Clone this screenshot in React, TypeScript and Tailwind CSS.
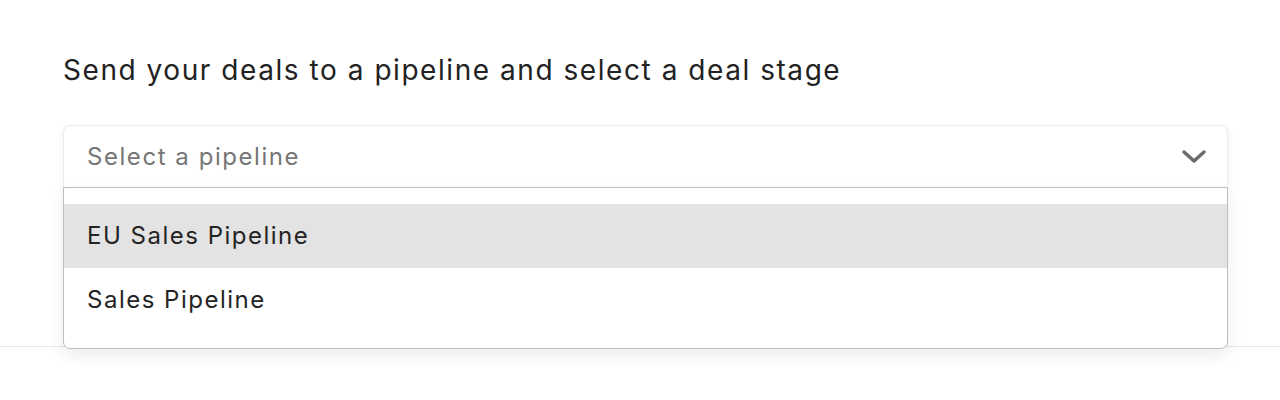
import React from "react";

export default function App() {
  return (
    <div className="w-[1280px] h-[400px] bg-white overflow-hidden" style={{ fontFamily: 'Inter, "Liberation Sans", Arial, sans-serif' }}>
      <div className="h-[347px] border-b border-[#e6e6e6] pl-[63px] pr-[52px] pt-[52px]">
        <h2 className="text-[28px] leading-[36px] tracking-[1.55px] text-[#222222] font-normal">
          Send your deals to a pipeline and select a deal stage
        </h2>
        <div className="relative mt-[37px]">
          <div className="h-[62px] rounded-t-[7px] border border-b-0 border-[#ececec] bg-white shadow-[0_2px_10px_rgba(0,0,0,0.06)] flex items-center justify-between pl-[23px] pr-[20px]">
            <span className="text-[24px] tracking-[1.55px] text-[#767676]">Select a pipeline</span>
            <svg width="26" height="16" viewBox="0 0 26 16" fill="none">
              <path d="M3 3L13 12L23 3" stroke="#6b6b6b" strokeWidth="3.5" strokeLinecap="round" strokeLinejoin="round" />
            </svg>
          </div>
          <div className="absolute left-0 right-0 top-[62px] z-10 bg-white border border-[#bdbdbd] rounded-b-[7px] py-[16px] shadow-[0_6px_16px_rgba(0,0,0,0.08)]">
            <div className="h-[64px] bg-[#e3e3e3] flex items-center pl-[23px] text-[24px] tracking-[1.5px] text-[#242424]">
              EU Sales Pipeline
            </div>
            <div className="h-[64px] flex items-center pl-[23px] text-[24px] tracking-[1.5px] text-[#242424]">
              Sales Pipeline
            </div>
          </div>
        </div>
      </div>
    </div>
  );
}
